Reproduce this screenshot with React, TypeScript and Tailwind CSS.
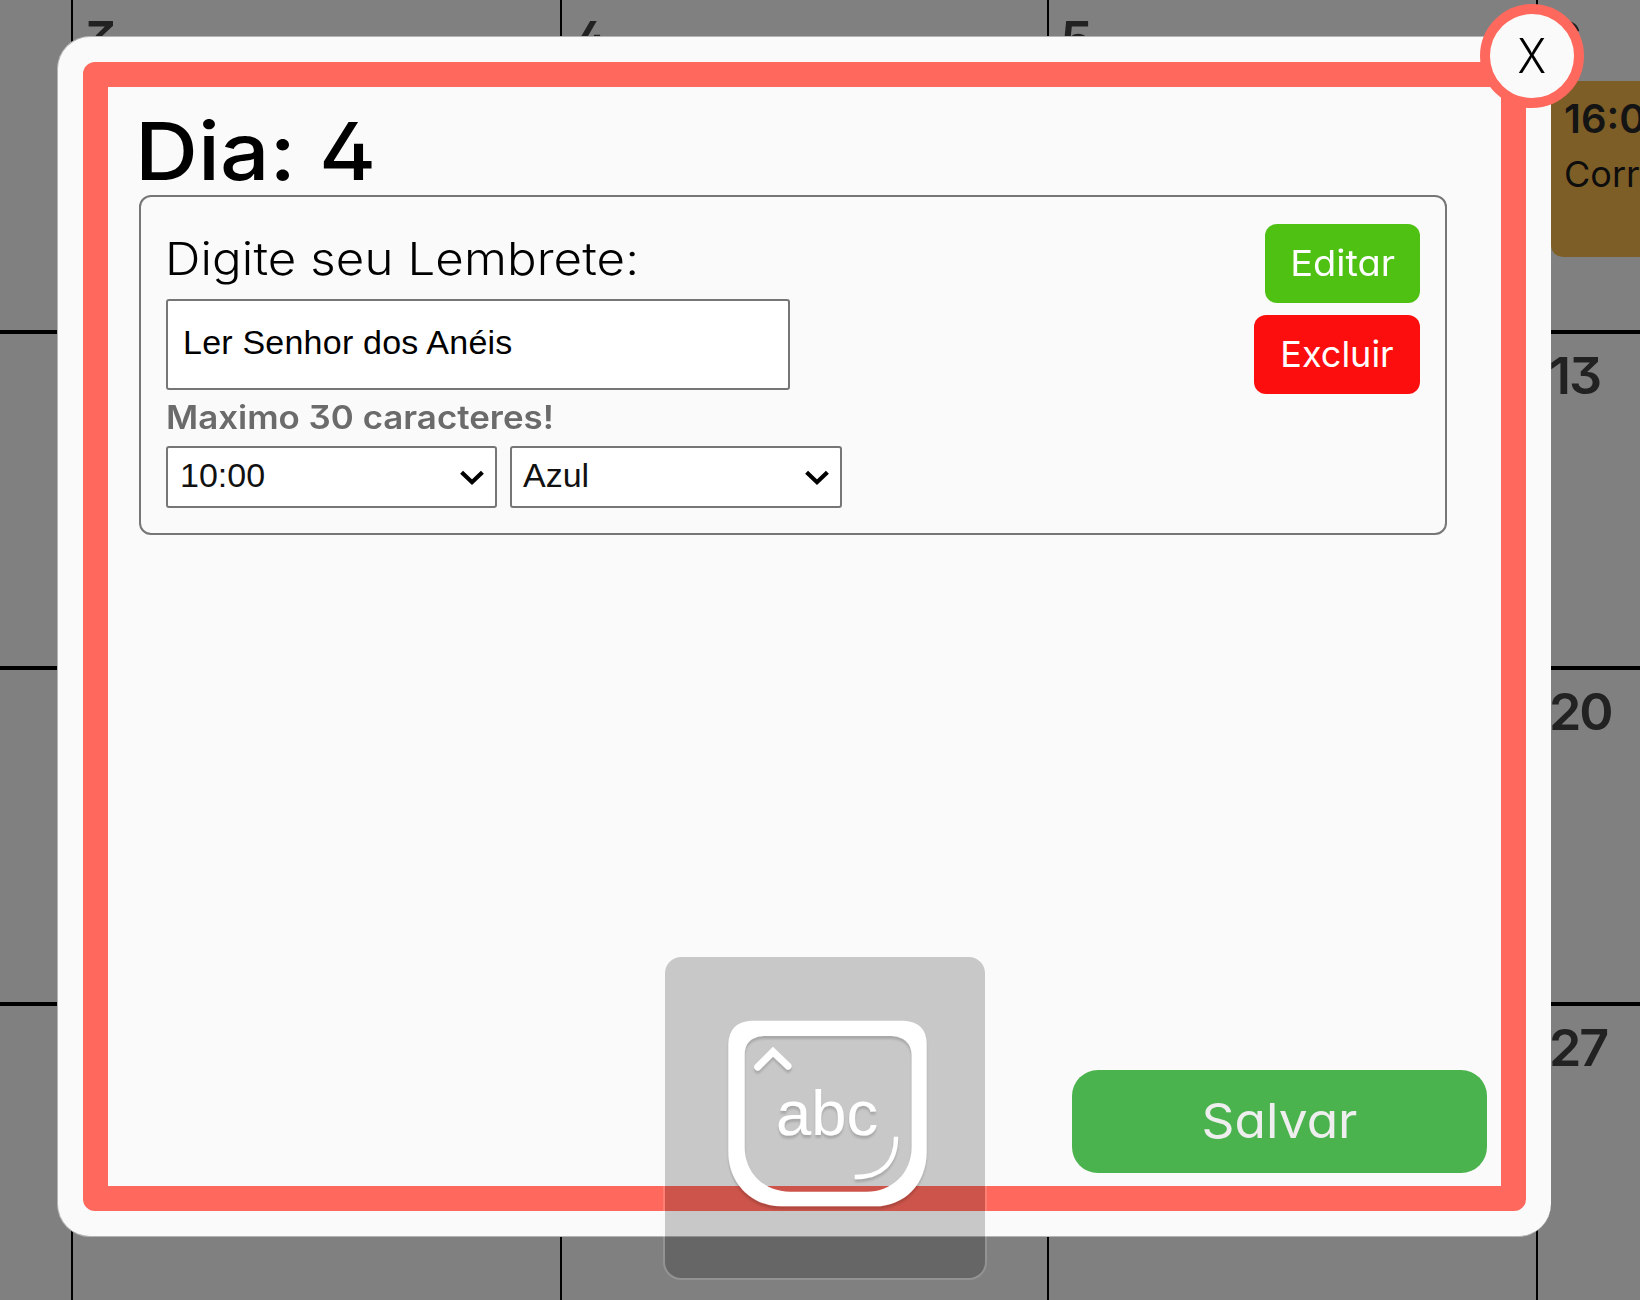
import type { ReactNode } from "react";

const sans = "font-['Inter',sans-serif] [font-feature-settings:'cv02','cv09']";
const geometric = "font-['Inter',sans-serif] [font-feature-settings:'cv11']";
const arial = "font-['Liberation_Sans',sans-serif]";

function Cell({ day, first, children }: { day?: string; first?: boolean; children?: ReactNode }) {
  return (
    <div className={`min-w-0 overflow-hidden border-r-2 border-b-4 border-black pl-[11px] ${first ? "pt-3.5" : "pt-4"}`}>
      {day && (
        <span
          className={`${sans} block w-max origin-left scale-x-[1.02] text-[51px] leading-none font-semibold tracking-[-2px] text-[#222222]`}
        >
          {day}
        </span>
      )}
      {children}
    </div>
  );
}

function Calendar() {
  return (
    <div className="grid h-full w-[2027px] grid-cols-[73px_489px_487px_489px_489px] grid-rows-[334px_336px_336px_336px]">
      <Cell first />
      <Cell first day="3" />
      <Cell first day="4" />
      <Cell first day="5" />
      <Cell first day="6">
        <div className="mt-4 ml-0.5 h-44 w-[460px] rounded-xl bg-[#7e5e27] pt-[18px] pl-[13px]">
          <div className={`${sans} text-[40px] leading-none font-semibold text-[#141414]`}>16:00</div>
          <div className={`${geometric} mt-[17px] text-[36px] leading-none text-[#0d0d0d]`}>Corr</div>
        </div>
      </Cell>
      {["13", "20", "27"].map((day) => (
        <div key={day} className="contents">
          <Cell />
          <Cell />
          <Cell />
          <Cell />
          <Cell day={day} />
        </div>
      ))}
    </div>
  );
}

function Select({ value, className }: { value: string; className: string }) {
  return (
    <div
      className={`${arial} flex h-[62px] items-center justify-between rounded-[3px] border-2 border-[#767676] bg-white pr-[11px] text-[34px] leading-none text-[#111111] ${className}`}
    >
      <span className="pb-[5px]">{value}</span>
      <svg width="24" height="16" viewBox="0 0 24 16" className="mt-0.5" fill="none" stroke="#000" strokeWidth="4.2">
        <path d="M1.6 2.2 12 12.2 22.4 2.2" />
      </svg>
    </div>
  );
}

function ReminderCard() {
  return (
    <div className="flex h-[340px] w-[1308px] justify-between rounded-xl border-2 border-[#767676] px-[25px]">
      <div className="flex flex-col pt-10">
        <label
          className={`${geometric} -ml-px block h-[62px] w-max origin-left scale-x-[1.105] text-[44.5px] leading-none font-[330] tracking-[0.1px] text-black`}
        >
          Digite seu Lembrete:
        </label>
        <div
          className={`${arial} flex h-[91px] w-[624px] items-center rounded-[3px] border-2 border-[#767676] bg-white pb-[5px] pl-[15px] text-[34px] leading-none tracking-[0.22px] text-black`}
        >
          Ler Senhor dos Anéis
        </div>
        <div
          className={`${sans} mt-3 h-11 w-max origin-left scale-x-[1.09] text-[32px] leading-none font-semibold text-[#6b6b6b]`}
        >
          Maximo 30 caracteres!
        </div>
        <div className="flex gap-[13px]">
          <Select value="10:00" className="w-[331px] pl-3" />
          <Select value="Azul" className="w-[332px] pl-[11px]" />
        </div>
      </div>
      <div className={`${geometric} flex flex-col items-end gap-3 pt-[27px] text-[36px] leading-none font-[430] text-white`}>
        <button className="h-[79px] w-[155px] rounded-xl bg-[#4ec113] pb-0.5">
          <span className="inline-block scale-x-[1.055]">Editar</span>
        </button>
        <button className="h-[79px] w-[166px] rounded-xl bg-[#fd0e0e] pb-0.5">Excluir</button>
      </div>
    </div>
  );
}

function CapsLockIndicator() {
  return (
    <div className="absolute top-[955px] left-[663px] h-[325px] w-[324px] rounded-[18px] border-2 border-white/15 bg-black/20 bg-clip-padding">
      <svg viewBox="75 81 960 963" className="h-full w-full" fill="none">
        <defs>
          <filter id="drop" x="-10%" y="-10%" width="120%" height="130%">
            <feDropShadow dx="0" dy="9" stdDeviation="2.5" floodColor="#000" floodOpacity="0.16" />
          </filter>
        </defs>
        <g filter="url(#drop)">
          <path
            fill="#fff"
            fillRule="evenodd"
            d="M333 272H792Q860 276 860 342V665C860 760 795 829 705 829H425C335 829 265 760 265 665V342Q267 276 333 272ZM370 318Q314 322 314 374V650C314 730 375 785 450 785H680C755 785 815 730 815 650V374Q812 322 756 318Z"
          />
          <path d="M353 411 399 365 444 408" stroke="#fff" strokeWidth="21" strokeLinecap="round" />
          <path d="M768 620C768 700 724 741 644 741" stroke="#fff" strokeWidth="13" />
          <text x="408" y="614" fill="#fff" fontSize="190" className={arial}>
            abc
          </text>
        </g>
      </svg>
    </div>
  );
}

export default function App() {
  return (
    <div className="relative h-[1300px] w-[1640px] overflow-hidden bg-[#808080]">
      <Calendar />

      <div className="absolute top-9 left-[57px] flex h-[1201px] w-[1494px] rounded-[33px] border border-r-0 border-[#b4b4b4] bg-[#fafafa] py-[25px] pr-[25px] pl-[25px]">
        <div className="flex flex-1 flex-col overflow-hidden rounded-xl border-[25px] border-[#ff695d] pt-6 pr-[14px] pb-[13px] pl-[31px]">
          <h1
            className={`${sans} -ml-1 h-[84px] w-max origin-left scale-x-[1.09] text-[80px] leading-none font-[540] text-black`}
          >
            Dia: 4
          </h1>
          <ReminderCard />
          <button
            className={`${geometric} mt-auto h-[103px] w-[415px] self-end rounded-[26px] bg-[#4bb34d] text-[48.5px] leading-none font-[430] text-[#eeeeee]`}
          >
            <span className="inline-block scale-x-[1.06]">Salvar</span>
          </button>
        </div>
      </div>

      <button
        className={`${geometric} absolute top-1 left-[1480px] flex size-[104px] items-center justify-center rounded-full border-[10px] border-[#ff695d] bg-[#fafafa] text-[48px] leading-none font-[360] text-black`}
      >
        <span className="scale-x-90">X</span>
      </button>

      <CapsLockIndicator />
    </div>
  );
}
